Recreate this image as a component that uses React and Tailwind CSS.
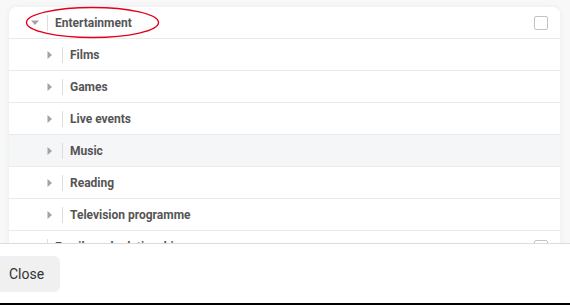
import React from "react";

function TriRight() {
  return (
    <svg width="6" height="10" viewBox="0 0 6 10" className="block">
      <path d="M0.5 1 L5 5 L0.5 9 Z" fill="#a3a3a3" />
    </svg>
  );
}
function TriDown() {
  return (
    <svg width="10" height="6" viewBox="0 0 10 6" className="block">
      <path d="M1 0.5 L9 0.5 L5 5 Z" fill="#a3a3a3" />
    </svg>
  );
}

function Row({ label, level, open, hl }) {
  return (
    <div
      className={`flex h-[32px] items-center border-b border-[#e9e9e9] ${hl ? "bg-[#f5f6f8]" : "bg-white"}`}
    >
      {level === 0 ? (
        <div className="flex w-[38px] shrink-0 items-center justify-end pr-[7px]">
          {open ? <TriDown /> : <TriRight />}
        </div>
      ) : (
        <div className="flex w-[53px] shrink-0 items-center justify-end pr-[9px]">
          <TriRight />
        </div>
      )}
      <div className="h-[16px] w-px bg-[#dedede]" />
      <div className="ml-[7px] flex-1 text-[12px] font-bold text-[#555]">{label}</div>
      {level === 0 && (
        <div className="mr-[12px] h-[14px] w-[14px] rounded-[2px] border border-[#c2c2c8] bg-white" />
      )}
    </div>
  );
}

export default function App() {
  const kids = ["Films", "Games", "Live events", "Music", "Reading", "Television programme"];
  return (
    <div className="relative flex h-[305px] w-[570px] flex-col overflow-hidden bg-white font-['Roboto',sans-serif]">
      <div className="h-[243px] shrink-0 overflow-hidden bg-[#f8f8f8] pl-[9px] pr-[10px] pt-[7px]">
        <div className="overflow-hidden rounded-t-[8px] bg-white shadow-[0_0_6px_rgba(0,0,0,0.06)]">
          <Row label="Entertainment" level={0} open />
          {kids.map((k) => (
            <Row key={k} label={k} level={1} hl={k === "Music"} />
          ))}
          <Row label="Family and relationships" level={0} />
        </div>
      </div>
      <div className="flex flex-1 flex-col border-t border-[#dcdcdc] bg-white">
        <div className="pt-[12px]">
          <button className="ml-[-8px] h-[36px] rounded-[6px] bg-[#f0f0f0] pl-[17px] pr-[16px] text-[14px] text-[#333]">
            Close
          </button>
        </div>
        <div className="mt-auto h-[2px] bg-black" />
      </div>
      <svg className="pointer-events-none absolute left-0 top-0" width="570" height="305">
        <ellipse cx="92.5" cy="22.5" rx="66" ry="15" fill="none" stroke="#e3001b" strokeWidth="1.4" />
      </svg>
    </div>
  );
}
